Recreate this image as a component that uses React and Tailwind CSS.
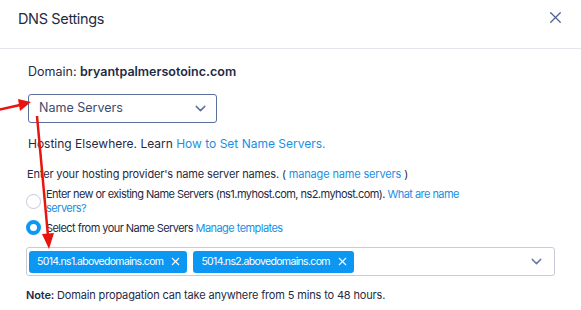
import { FiChevronDown, FiX } from "react-icons/fi";

const Chip = ({ label }) => (
  <span className="flex h-[22px] items-center gap-[6px] rounded-[3px] bg-[#0b97f2] pl-[8px] pr-[5px] text-[10.5px] tracking-[-0.65px] text-white">
    <span className="whitespace-nowrap">{label}</span>
    <FiX className="h-[13px] w-[13px] shrink-0" />
  </span>
);

const Arrows = () => (
  <svg className="pointer-events-none absolute left-0 top-0" width="120" height="260" viewBox="0 0 120 260">
    <line x1="-2" y1="110" x2="20" y2="105" stroke="#e8140f" strokeWidth="2.5" />
    <polygon points="31,102 18,99 20,111" fill="#e8140f" />
    <line x1="37" y1="116" x2="48" y2="236" stroke="#e8140f" strokeWidth="2.5" />
    <polygon points="49,249 42,234 54,233" fill="#e8140f" />
  </svg>
);

export default function App() {
  return (
    <div className="relative h-[310px] w-[581px] overflow-hidden bg-white font-['Inter',sans-serif] text-[#1f2a44]">
      <header className="flex h-[49px] items-start justify-between border-b border-[#e4e6ee] pl-[18px] pr-[16px] pt-[9px]">
        <h1 className="text-[14.5px] leading-[20px] tracking-[-0.35px]">DNS Settings</h1>
        <FiX className="mt-[-1px] h-[19px] w-[19px] text-[#4d6290]" strokeWidth={1.6} />
      </header>

      <div className="pl-[28px] pr-[26px] pt-[14px]">
        <p className="text-[12.5px] leading-[18px]">
          Domain: <span className="font-semibold">bryantpalmersotoinc.com</span>
        </p>

        <div className="mt-[13px] flex h-[29px] w-[189px] items-center justify-between rounded-[3px] border border-[#5b6f9d] pl-[10px] pr-[7px] text-[12.5px] text-[#3c4b6e]">
          Name Servers
          <FiChevronDown className="h-[17px] w-[17px] text-[#5b6f9d]" />
        </div>

        <p className="mt-[12px] text-[12px] leading-[18px]">
          Hosting Elsewhere. Learn <span className="text-[#1a8fe3]">How to Set Name Servers.</span>
        </p>

        <p className="-ml-[1px] mt-[13px] text-[11px] leading-[16px] tracking-[-0.15px]">
          Enter your hosting provider's name server names. ( <span className="text-[#1a8fe3]">manage name servers</span> )
        </p>

        <div className="-ml-[2px] mt-[5px] flex flex-col gap-[5px] text-[11px] leading-[14px] tracking-[-0.55px]">
          <label className="flex items-center gap-[5px]">
            <span className="h-[15px] w-[15px] shrink-0 rounded-full border border-[#c6cad6] bg-white" />
            <span className="max-w-[440px]">
              Enter new or existing Name Servers (ns1.myhost.com, ns2.myhost.com). <span className="text-[#1a8fe3]">What are name servers?</span>
            </span>
          </label>
          <label className="flex items-center gap-[5px]">
            <span className="h-[15px] w-[15px] shrink-0 rounded-full border-[4px] border-[#0b97f2] bg-white" />
            <span>
              Select from your Name Servers <span className="text-[#1a8fe3]">Manage templates</span>
            </span>
          </label>
        </div>

        <div className="-ml-[2px] mt-[12px] flex h-[29px] items-center justify-between rounded-[3px] border border-[#c9ccd8] pl-[2px] pr-[9px]">
          <div className="flex gap-[6px]">
            <Chip label="5014.ns1.abovedomains.com" />
            <Chip label="5014.ns2.abovedomains.com" />
          </div>
          <FiChevronDown className="h-[17px] w-[17px] text-[#6a7aa0]" />
        </div>

        <p className="-ml-[2px] mt-[11px] text-[11px] leading-[16px] tracking-[-0.15px]">
          <span className="font-semibold">Note:</span> Domain propagation can take anywhere from 5 mins to 48 hours.
        </p>
      </div>

      <Arrows />
    </div>
  );
}
